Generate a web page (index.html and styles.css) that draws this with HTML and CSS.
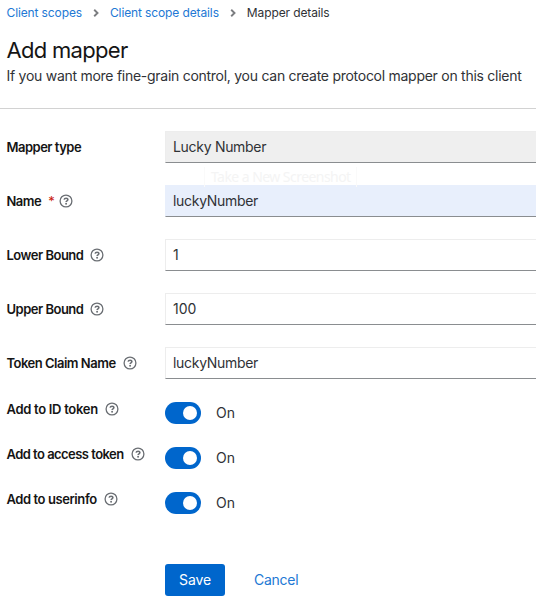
FILE: index.html
```html
<!DOCTYPE html>
<html lang="en">
<head>
<meta charset="utf-8">
<title>Add mapper</title>
<link rel="stylesheet" href="styles.css">
</head>
<body>
<svg class="defs" width="0" height="0" aria-hidden="true">
  <symbol id="help" viewBox="0 0 14 14">
    <circle cx="7" cy="7" r="5.9" fill="none" stroke="currentColor" stroke-width="1.3"/>
    <path d="M5.1 5.7C5.3 4.6 6.1 4.2 7.1 4.2C8.1 4.2 8.9 4.8 8.9 5.6C8.9 6.8 7.1 6.8 7.1 8" fill="none" stroke="currentColor" stroke-width="1.6"/>
    <circle cx="7.1" cy="9.8" r=".95" fill="currentColor"/>
  </symbol>
  <symbol id="chevron" viewBox="0 0 6 8">
    <path d="M1.2 .8L4.5 4L1.2 7.2" fill="none" stroke="currentColor" stroke-width="1.9"/>
  </symbol>
</svg>
<header class="page-header">
  <nav class="breadcrumb">
    <a>Client scopes</a>
    <svg class="chevron"><use href="#chevron"/></svg>
    <a>Client scope details</a>
    <svg class="chevron"><use href="#chevron"/></svg>
    <span>Mapper details</span>
  </nav>
  <h1>Add mapper</h1>
  <p>If you want more fine-grain control, you can create protocol mapper on this client</p>
</header>
<form class="form">
  <div class="row"><label>Mapper type</label><div class="field readonly">Lucky Number</div></div>
  <div class="tooltip">Take a New Screenshot</div>
  <div class="row"><label>Name<b class="required">*</b><svg class="help"><use href="#help"/></svg></label><div class="field autofill">luckyNumber</div></div>
  <div class="row"><label>Lower Bound<svg class="help"><use href="#help"/></svg></label><div class="field number">1</div></div>
  <div class="row"><label>Upper Bound<svg class="help"><use href="#help"/></svg></label><div class="field number">100</div></div>
  <div class="row"><label>Token Claim Name<svg class="help"><use href="#help"/></svg></label><div class="field">luckyNumber</div></div>
  <div class="row toggle"><label class="wide">Add to ID token<svg class="help"><use href="#help"/></svg></label><div class="switch"><i></i><span>On</span></div></div>
  <div class="row toggle"><label class="narrow">Add to access token<svg class="help"><use href="#help"/></svg></label><div class="switch"><i></i><span>On</span></div></div>
  <div class="row toggle"><label class="medium">Add to userinfo<svg class="help"><use href="#help"/></svg></label><div class="switch"><i></i><span>On</span></div></div>
  <div class="actions"><button type="button" class="save">Save</button><button type="button" class="cancel">Cancel</button></div>
</form>
</body>
</html>
```
FILE: styles.css
```css
* { box-sizing: border-box; }
body { margin: 0; height: 602px; overflow: hidden; background: #fff; color: #303236; font: 14px/20px Inter, "Noto Sans", sans-serif; white-space: nowrap; }
.defs { position: absolute; }
.page-header { height: 109px; padding: 3px 0 0 6.5px; border-bottom: 1px solid #d2d2d2; }
.breadcrumb { display: flex; align-items: center; height: 20px; font-size: 12px; letter-spacing: -.12px; }
.breadcrumb a { color: #2278d4; }
.chevron { width: 6px; height: 8px; margin: 0 11px; color: #7b7d80; }
h1 { margin: 12px 0 0; height: 30px; font-size: 22px; line-height: 30px; font-weight: 400; letter-spacing: -.7px; color: #151515; }
p { margin: 0; height: 22px; line-height: 22px; letter-spacing: -.27px; }
.form { padding: 22px 0 0 6.5px; position: relative; }
.row { display: grid; grid-template-columns: 158.5px 1fr; height: 32px; margin-bottom: 22px; }
label { display: flex; align-items: center; font-size: 13px; font-weight: 600; color: #151515; letter-spacing: -.5px; }
.wide { letter-spacing: -.3px; }
.narrow { letter-spacing: -.54px; }
.medium { letter-spacing: -.42px; }
.required { color: #c9190b; margin-left: 7px; font-weight: 400; }
.help { width: 14px; height: 14px; margin-left: 7px; color: #6a6e73; }
.required + .help { margin-left: 5px; }
.field { display: flex; align-items: center; padding-left: 7px; border: 1px solid #ededed; border-right: 0; border-bottom-color: #8a8d90; letter-spacing: -.3px; }
.number { letter-spacing: 0; }
.readonly { background: #efefef; }
.autofill { background: #e8effc; border-color: #e8effc; border-bottom-color: #8a8d90; }
.tooltip { position: absolute; left: 204px; top: 58px; width: 153px; height: 20px; padding-left: 6px; color: #f4f4f4; border-right: 1px solid #fafafa; border-left: 1px solid #fafafa; font-family: "Noto Sans", sans-serif; letter-spacing: -.55px; }
.toggle { height: 24px; margin-bottom: 21px; }
.toggle label { height: 16px; }
.switch { display: flex; align-items: center; }
.switch i { display: flex; justify-content: flex-end; width: 36px; height: 22px; padding: 4px; border-radius: 11px; background: #06c; margin-right: 15px; }
.switch i::after { content: ""; width: 14px; height: 14px; border-radius: 50%; background: #fff; }
.actions { display: flex; padding: 28px 0 0 158.5px; }
button { height: 32px; padding: 0; border: 0; font: inherit; letter-spacing: -.1px; background: none; color: #2278d4; }
.save { width: 60px; border-radius: 3px; background: #06c; color: #fff; margin-right: 29px; }
.cancel { letter-spacing: -.25px; }
```
